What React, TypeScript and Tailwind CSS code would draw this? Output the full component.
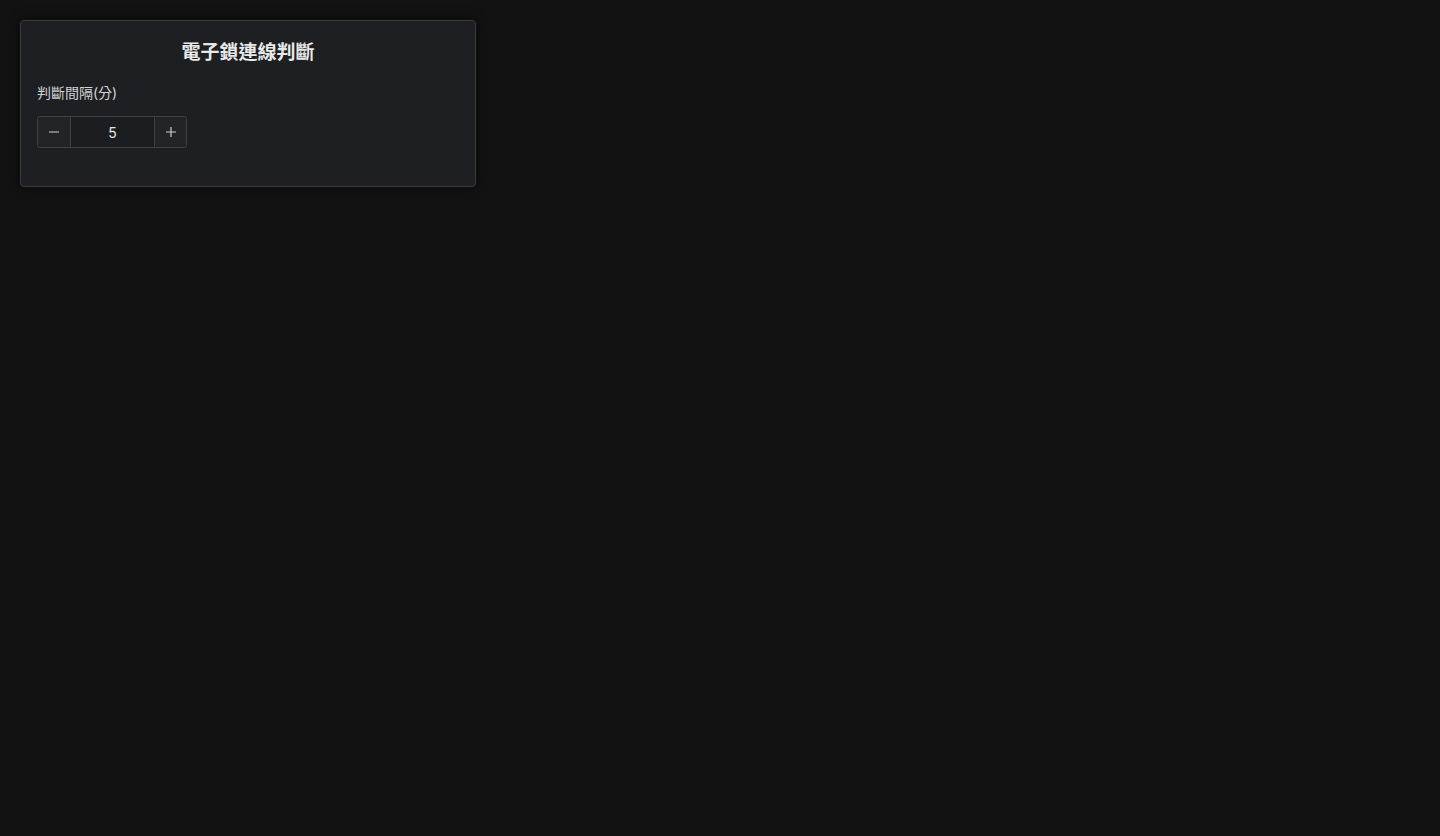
import React, { useState } from "react";

export default function App() {
  const [v, setV] = useState(5);
  return (
    <div
      className="min-h-screen w-full bg-[#121212] p-5"
      style={{ fontFamily: '"Inter", "Noto Sans CJK TC", sans-serif' }}
    >
      <div className="w-[456px] rounded-[4px] border border-[#3a3b3d] bg-[#1d1f22] px-4 pt-[18px] pb-[38px] shadow-[0_0_12px_rgba(0,0,0,0.5)]">
        <h2 className="text-center text-[19px] font-bold leading-[28px] text-[#e8e8e8]">
          電子鎖連線判斷
        </h2>
        <div className="mt-[16px] text-[14px] leading-[20px] text-[#d4d4d4]">判斷間隔(分)</div>
        <div className="mt-[13px] flex h-[32px] w-[150px] overflow-hidden rounded-[3px] border border-[#3f4043]">
          <button
            onClick={() => setV(v - 1)}
            className="flex w-[32px] items-center justify-center bg-[#222427] text-[#cfcfcf]"
          >
            <svg width="12" height="12" viewBox="0 0 12 12">
              <path d="M1 6h10" stroke="currentColor" strokeWidth="1.2" />
            </svg>
          </button>
          <div className="flex flex-1 items-center justify-center border-x border-[#3f4043] bg-[#1b1d20] text-[14px] text-[#e6e6e6]">
            {v}
          </div>
          <button
            onClick={() => setV(v + 1)}
            className="flex w-[31px] items-center justify-center bg-[#222427] text-[#cfcfcf]"
          >
            <svg width="12" height="12" viewBox="0 0 12 12">
              <path d="M1 6h10M6 1v10" stroke="currentColor" strokeWidth="1.2" />
            </svg>
          </button>
        </div>
      </div>
    </div>
  );
}
